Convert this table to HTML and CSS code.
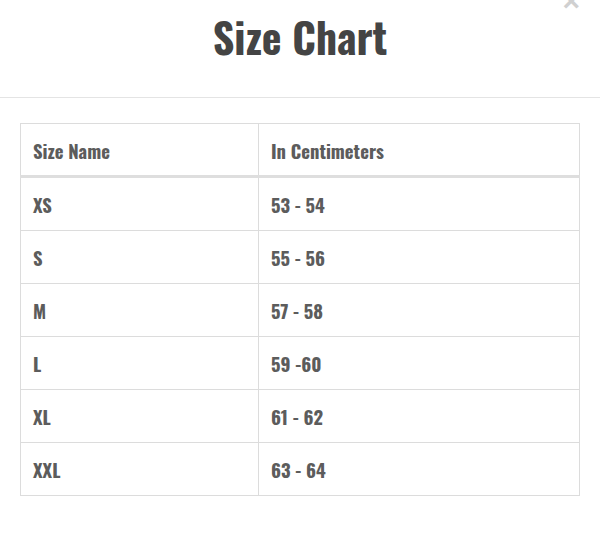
FILE: index.html
```
<!DOCTYPE html>
<html>
<head>
<meta charset="utf-8">
<link rel="stylesheet" href="styles.css">
</head>
<body>
<div class="modal">
  <span class="close">×</span>
  <header class="head">
    <h1 class="title">Size Chart</h1>
  </header>
  <div class="body">
    <table class="chart">
      <thead>
        <tr><th class="c1">Size Name</th><th>In Centimeters</th></tr>
      </thead>
      <tbody>
        <tr><td>XS</td><td>53 - 54</td></tr>
        <tr><td>S</td><td>55 - 56</td></tr>
        <tr><td>M</td><td>57 - 58</td></tr>
        <tr><td>L</td><td>59 -60</td></tr>
        <tr><td>XL</td><td>61 - 62</td></tr>
        <tr><td>XXL</td><td>63 - 64</td></tr>
      </tbody>
    </table>
  </div>
</div>
</body>
</html>
```
FILE: styles.css
```
html, body {
  margin: 0;
  padding: 0;
  background: #fff;
}
body {
  font-family: "Oswald", "Roboto Condensed", "Liberation Sans", sans-serif;
  color: #555;
}
.modal {
  position: relative;
  width: 600px;
}
.close {
  position: absolute;
  top: -14px;
  right: 20px;
  font-family: "Liberation Sans", sans-serif;
  font-size: 30px;
  color: #d0d0d0;
  font-weight: bold;
  line-height: 1;
}
.head {
  height: 97px;
  border-bottom: 1px solid #e4e4e4;
  display: flex;
  justify-content: center;
}
.title {
  margin: 0;
  padding-top: 6px;
  font-size: 42px;
  font-weight: 700;
  color: #444;
  line-height: 60px;
}
.body {
  padding: 25px 20px 0;
}
.chart {
  width: 560px;
  border-collapse: collapse;
  table-layout: fixed;
}
.chart th, .chart td {
  border: 1px solid #dcdcdc;
  text-align: left;
  padding: 0 0 0 12px;
  font-size: 18.6px;
  font-weight: 700;
  color: #5c5c5c;
  height: 52px;
}
.chart th {
  height: 49px;
  padding-top: 2px;
  border-bottom: 3px solid #dedede;
}
.chart .c1 {
  width: 225px;
}
```
